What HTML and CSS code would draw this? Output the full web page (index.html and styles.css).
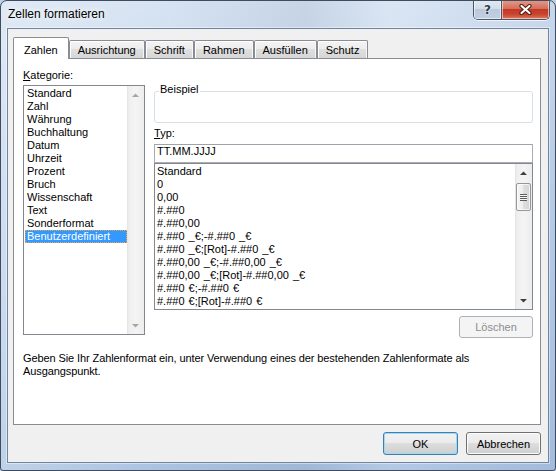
FILE: index.html
```html
<!DOCTYPE html>
<html lang="de">
<head>
<meta charset="UTF-8">
<meta name="viewport" content="width=device-width, initial-scale=1.0">
<title>Zellen formatieren</title>
<link rel="stylesheet" href="styles.css">
</head>
<body>
<div class="window">
    <div class="titlebar">
        <span class="title">Zellen formatieren</span>
        <div class="caption_buttons">
            <span class="cap_btn help">?</span>
            <span class="cap_btn close">
                <svg width="13" height="11" viewBox="0 0 13 11">
                    <path d="M2.5 2 L10.5 9 M10.5 2 L2.5 9" stroke="#4a1c14" stroke-width="4.2" stroke-linecap="round"/>
                    <path d="M2.5 2 L10.5 9 M10.5 2 L2.5 9" stroke="#ffffff" stroke-width="2.2" stroke-linecap="round"/>
                </svg>
            </span>
        </div>
    </div>

    <div class="client">
        <div class="tabs">
            <span class="tab active">Zahlen</span>
            <span class="tab">Ausrichtung</span>
            <span class="tab">Schrift</span>
            <span class="tab">Rahmen</span>
            <span class="tab">Ausfüllen</span>
            <span class="tab">Schutz</span>
        </div>

        <div class="panel">
            <div class="panel_body">
                <div class="category">
                    <div class="label"><u>K</u>ategorie:</div>
                    <div class="listbox category_list">
                        <ul class="items">
                            <li>Standard</li>
                            <li>Zahl</li>
                            <li>Währung</li>
                            <li>Buchhaltung</li>
                            <li>Datum</li>
                            <li>Uhrzeit</li>
                            <li>Prozent</li>
                            <li>Bruch</li>
                            <li>Wissenschaft</li>
                            <li>Text</li>
                            <li>Sonderformat</li>
                            <li class="selected">Benutzerdefiniert</li>
                        </ul>
                        <div class="scrollbar disabled">
                            <span class="scroll_arrow"><svg width="7" height="4" viewBox="0 0 7 4"><polygon points="0,4 3.5,0.5 7,4"/></svg></span>
                            <span class="scroll_track"></span>
                            <span class="scroll_arrow"><svg width="7" height="4" viewBox="0 0 7 4"><polygon points="0,0 7,0 3.5,3.5"/></svg></span>
                        </div>
                    </div>
                </div>

                <div class="format">
                    <div class="sample">
                        <span class="sample_label">Beispiel</span>
                    </div>
                    <div class="label type_label"><u>T</u>yp:</div>
                    <div class="type_input">TT.MM.JJJJ</div>
                    <div class="listbox format_list">
                        <ul class="items">
                            <li>Standard</li>
                            <li>0</li>
                            <li>0,00</li>
                            <li>#.##0</li>
                            <li>#.##0,00</li>
                            <li>#.##0 _€;-#.##0 _€</li>
                            <li>#.##0 _€;[Rot]-#.##0 _€</li>
                            <li>#.##0,00 _€;-#.##0,00 _€</li>
                            <li>#.##0,00 _€;[Rot]-#.##0,00 _€</li>
                            <li>#.##0 €;-#.##0 €</li>
                            <li>#.##0 €;[Rot]-#.##0 €</li>
                        </ul>
                        <div class="scrollbar">
                            <span class="scroll_arrow"><svg width="7" height="4" viewBox="0 0 7 4"><polygon points="0,4 3.5,0.5 7,4"/></svg></span>
                            <span class="scroll_track"><span class="scroll_thumb"></span></span>
                            <span class="scroll_arrow"><svg width="7" height="4" viewBox="0 0 7 4"><polygon points="0,0 7,0 3.5,3.5"/></svg></span>
                        </div>
                    </div>
                    <button class="button small" disabled>Löschen</button>
                </div>
            </div>

            <p class="hint">Geben Sie Ihr Zahlenformat ein, unter Verwendung eines der bestehenden Zahlenformate als Ausgangspunkt.</p>
        </div>

        <div class="dialog_buttons">
            <button class="button default">OK</button>
            <button class="button">Abbrechen</button>
        </div>
    </div>
</div>
</body>
</html>
```

FILE: styles.css
```css
* {
    margin: 0;
    padding: 0;
    box-sizing: border-box;
}

body {
    width: 556px;
    height: 471px;
    overflow: hidden;
    font-family: "Liberation Sans", Arial, sans-serif;
    font-size: 11px;
    color: #000;
    background: #bcd0e8;
}

/* aero frame */
.window {
    width: 556px;
    height: 471px;
    display: flex;
    flex-direction: column;
    border: 1px solid #3d4c60;
    border-radius: 7px 7px 3px 3px;
    overflow: hidden;
    background:
        linear-gradient(90deg, rgba(255,255,255,0.25), rgba(255,255,255,0) 30%, rgba(90,110,140,0.12) 55%, rgba(255,255,255,0.1) 70%, rgba(120,150,200,0.15)),
        linear-gradient(#d6e3f2, #c3d5eb 40%, #b4cae5 80%, #aac2e0);
}

.titlebar {
    height: 27px;
    flex-shrink: 0;
    display: flex;
    align-items: flex-start;
    padding-left: 7px;
}

.title {
    font-size: 12px;
    line-height: 14px;
    padding-top: 6px;
    text-shadow: 0 0 6px #fff, 0 0 10px rgba(255,255,255,0.8);
}

.caption_buttons {
    display: flex;
    height: 20px;
    margin-left: auto;
    margin-right: 5px;
    margin-top: -1px;
    border: 1px solid #4b5566;
    border-top: 0;
    border-radius: 0 0 5px 5px;
    overflow: hidden;
    box-shadow: 0 1px 0 rgba(255,255,255,0.7);
}

.cap_btn {
    display: flex;
    align-items: center;
    justify-content: center;
    height: 19px;
    box-shadow: inset 0 0 0 1px rgba(255,255,255,0.55);
}

.cap_btn.help {
    width: 27px;
    font-family: "DejaVu Sans", sans-serif;
    font-size: 12px;
    font-weight: bold;
    color: #2e3a4a;
    text-shadow: 0 0 2px #fff, 0 0 1px #fff;
    background: linear-gradient(#e2eaf3, #d2dde9 45%, #bac9db 50%, #c1d0e1 100%);
}

.cap_btn.close {
    width: 48px;
    border-left: 1px solid #4b5566;
    background: linear-gradient(#e49c8c, #d56f5b 45%, #c13926 50%, #c8442d 75%, #df785d 100%);
}

/* client area */
.client {
    height: 435px;
    margin: 0 6px 7px;
    border: 1px solid #6f849e;
    background: #f0f0f0;
    box-shadow: 0 0 0 1px rgba(255,255,255,0.45);
}

.tabs {
    position: relative;
    z-index: 1;
    display: flex;
    align-items: flex-end;
    height: 22px;
    margin: 8px 0 -1px 5px;
}

.tab {
    height: 18px;
    margin-bottom: 1px;
    padding: 3px 8px 0;
    line-height: 13px;
    border: 1px solid #898c95;
    border-bottom: 0;
    border-radius: 2px 2px 0 0;
    background: linear-gradient(#f4f4f4, #ececec 50%, #dfdfdf 50%, #d6d6d6);
    box-shadow: inset 1px 1px 0 #fff, inset -1px 0 0 #f6f6f6;
    white-space: nowrap;
}

.tab.active {
    height: 22px;
    margin-bottom: 0;
    padding: 6px 10px 0;
    background: #fff;
    box-shadow: none;
}

.panel {
    height: 367px;
    margin: 0 7px 0 5px;
    padding: 10px 7px 0 9px;
    border: 1px solid #898c95;
    background: #fff;
}

.panel_body {
    display: flex;
    gap: 9px;
}

.label {
    line-height: 13px;
}

.category {
    width: 122px;
}

.category .label {
    margin-bottom: 3px;
}

.listbox {
    display: flex;
    border: 1px solid #828790;
    background: #fff;
    overflow: hidden;
}

.items {
    flex: 1;
    list-style: none;
    padding: 1px 0 0 1px;
}

.items li {
    height: 13px;
    line-height: 13px;
    padding-left: 1px;
    white-space: nowrap;
}

.items li.selected {
    background: #3399ff;
    color: #fff;
    outline: 1px dotted #e9a43a;
    outline-offset: -1px;
}

.category_list {
    height: 250px;
}

.category_list .items li {
    padding-left: 2px;
}

.format_list .items li {
    word-spacing: 1px;
}

/* scrollbars */
.scrollbar {
    width: 17px;
    display: flex;
    flex-direction: column;
    background: linear-gradient(90deg, #e2e2e2, #efefef 2px, #f4f4f4 50%, #ededed);
}

.scroll_arrow {
    height: 17px;
    display: flex;
    align-items: center;
    justify-content: center;
}

.scroll_arrow svg {
    fill: #3e3e3e;
}

.scrollbar.disabled .scroll_arrow svg {
    fill: #a6a6a6;
}

.scroll_track {
    flex: 1;
}

.scroll_thumb {
    display: flex;
    align-items: center;
    justify-content: center;
    height: 28px;
    margin: 2px 1px 0;
    border: 1px solid #979797;
    border-radius: 2px;
    background: linear-gradient(90deg, #f6f6f6, #ececec 50%, #dedede 50%, #d4d4d4);
    box-shadow: inset 0 0 0 1px rgba(255,255,255,0.7);
}

.scroll_thumb::before {
    content: "";
    width: 7px;
    height: 7px;
    background: repeating-linear-gradient(#5c5c5c 0 1px, #f6f6f6 1px 2px);
}

/* right column */
.format {
    width: 379px;
    display: flex;
    flex-direction: column;
}

.sample {
    height: 32px;
    margin-top: 22px;
    border: 1px solid #d5dfe5;
    border-radius: 3px;
}

.sample_label {
    display: block;
    width: fit-content;
    margin: -9px 0 0 4px;
    padding: 0 1px;
    line-height: 13px;
    background: #fff;
}

.type_label {
    margin-top: 4px;
}

.type_input {
    height: 19px;
    margin-top: 4px;
    padding: 0 2px;
    line-height: 13px;
    border: 1px solid #abadb3;
    border-top-color: #9ea3ab;
}

.format_list {
    height: 147px;
}

/* buttons */
.button {
    width: 75px;
    height: 23px;
    font: inherit;
    color: #000;
    border: 1px solid #707070;
    border-radius: 3px;
    background: linear-gradient(#f2f2f2, #ebebeb 50%, #dddddd 50%, #cfcfcf);
    box-shadow: inset 0 0 0 1px #fcfcfc;
}

.button.default {
    border-color: #3c7fb1;
    box-shadow: inset 0 0 0 1px #9edaf8;
}

.button.small {
    width: 74px;
    height: 22px;
    margin-top: 6px;
    align-self: flex-end;
}

.button:disabled {
    color: #8d8d8d;
    border-color: #adb2b5;
    background: #f4f4f4;
    box-shadow: none;
}

.hint {
    width: 500px;
    margin-top: 14px;
    line-height: 13px;
    letter-spacing: -0.1px;
}

.dialog_buttons {
    display: flex;
    justify-content: flex-end;
    gap: 8px;
    margin-top: 7px;
    padding-right: 7px;
}
```
